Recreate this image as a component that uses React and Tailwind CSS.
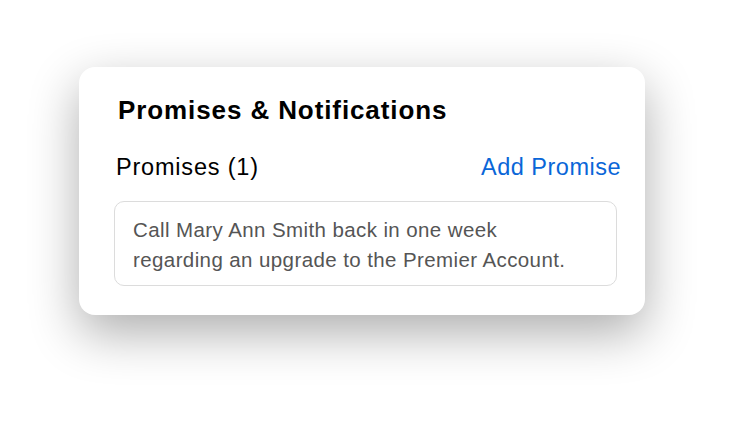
export default function App() {
  return (
    <div className="min-h-screen w-full bg-white font-['Liberation_Sans',Arial,sans-serif]">
      <div className="pt-[67px] pl-[79px]">
        {/* CARD */}
        <div className="w-[566px] h-[248px] rounded-[16px] bg-white shadow-[0_18px_50px_rgba(0,0,0,0.32)] pt-[28px] pl-[35px] pr-[24px]">
          <h2 className="pl-[4px] text-[26px] leading-[30px] font-bold tracking-[0.9px] text-black">
            Promises &amp; Notifications
          </h2>

          <div className="mt-[28px] flex items-center justify-between pl-[2px]">
            <span className="text-[23.5px] leading-[28px] tracking-[0.8px] text-black">Promises (1)</span>
            <button className="text-[23.5px] leading-[28px] tracking-[0.5px] text-[#0a66d8]">Add Promise</button>
          </div>

          <div className="mt-[20px] mr-[4px] h-[85px] rounded-[10px] border border-[#dcdcdc] px-[18px] pt-[13px]">
            <p className="text-[20.5px] leading-[30px] tracking-[0.4px] text-[#555555]">
              Call Mary Ann Smith back in one week
              <br />
              regarding an upgrade to the Premier Account.
            </p>
          </div>
        </div>
      </div>
    </div>
  );
}
